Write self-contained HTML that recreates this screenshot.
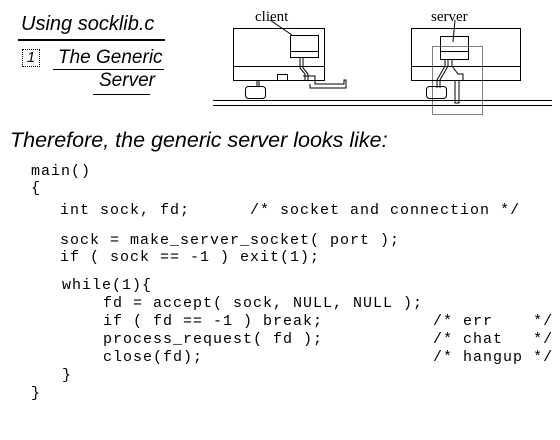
<!DOCTYPE html>
<html><head><style>
body{margin:0;width:560px;height:440px;background:#fff;position:relative;overflow:hidden;font-family:"Liberation Mono",monospace;}
.h{position:absolute;font-family:"Liberation Sans",sans-serif;font-style:italic;color:#000;white-space:nowrap;}
.c{position:absolute;font-size:15px;letter-spacing:1px;line-height:18px;white-space:pre;color:#000;}
</style></head><body>
<div class="h" style="left:21px;top:13px;font-size:20px;">Using socklib.c</div>
<div style="position:absolute;left:18px;top:39px;width:147px;height:2px;background:#000"></div>
<div style="position:absolute;left:22px;top:49px;width:16px;height:16px;border:1px dotted #000;font-family:'Liberation Sans',sans-serif;font-style:italic;font-size:15px;line-height:16px;text-align:center">1</div>
<div class="h" style="left:58px;top:47px;font-size:19px;">The Generic</div>
<div style="position:absolute;left:53px;top:69px;width:111px;height:1px;background:#000"></div>
<div class="h" style="left:99px;top:70px;font-size:19px;">Server</div>
<div style="position:absolute;left:93px;top:94px;width:57px;height:1px;background:#000"></div>
<div class="h" style="left:10px;top:128px;font-size:21.5px;">Therefore, the generic server looks like:</div>

<svg style="position:absolute;left:0;top:0" width="560" height="120">
<g fill="none" stroke="#000" stroke-width="1">
<text x="255" y="21" font-family="Liberation Serif" font-size="15" fill="#000" stroke="none">client</text>
<text x="431" y="21" font-family="Liberation Serif" font-size="15" fill="#000" stroke="none">server</text>
<rect x="233.5" y="28.5" width="91" height="52"/>
<line x1="233" y1="66.5" x2="325" y2="66.5"/>
<rect x="290.5" y="35.5" width="28" height="22"/>
<line x1="290" y1="51.5" x2="318" y2="51.5"/>
<path d="M270 20 L292 35"/>
<path d="M300 58 V68 L305 74 V80 M303 58 V68 L308 74 V80"/>
<path d="M303 76 H315 V84 H344 V80 H346 V88 H310 V84"/>
<rect x="277.5" y="74.5" width="10" height="6"/>
<path d="M257 80 V86 M259 80 V86"/>
<rect x="245.5" y="86.5" width="20" height="12" rx="3"/>
<rect x="411.5" y="28.5" width="109" height="52"/>
<line x1="411" y1="66.5" x2="520" y2="66.5"/>
<rect x="440.5" y="36.5" width="28" height="23"/>
<line x1="440" y1="51.5" x2="468" y2="51.5"/>
<path d="M455 20 L453 42"/>
<path d="M445 60 V66 L437 80 V88 M448 60 V66 L440 80 V88 M452 60 V66 L458 74 H463 V80"/>
<path d="M455 80 V103 H459 V80"/>
<rect x="426.5" y="86.5" width="20" height="12" rx="3"/>
<line x1="213" y1="100.5" x2="552" y2="100.5"/>
<line x1="213" y1="105.5" x2="552" y2="105.5"/>
<rect x="432.5" y="46.5" width="50" height="68" stroke-dasharray="1,1"/>
</g>
</svg>

<div class="c" style="left:31px;top:163px">main()</div>
<div class="c" style="left:31px;top:180px">{</div>
<div class="c" style="left:60px;top:202px">int sock, fd;      /* socket and connection */</div>
<div class="c" style="left:60px;top:232px">sock = make_server_socket( port );</div>
<div class="c" style="left:60px;top:249px">if ( sock == -1 ) exit(1);</div>
<div class="c" style="left:62px;top:277px">while(1){</div>
<div class="c" style="left:103px;top:295px">fd = accept( sock, NULL, NULL );</div>
<div class="c" style="left:103px;top:313px">if ( fd == -1 ) break;           /* err    */</div>
<div class="c" style="left:103px;top:331px">process_request( fd );           /* chat   */</div>
<div class="c" style="left:103px;top:349px">close(fd);                       /* hangup */</div>
<div class="c" style="left:62px;top:367px">}</div>
<div class="c" style="left:31px;top:385px">}</div>
</body></html>
